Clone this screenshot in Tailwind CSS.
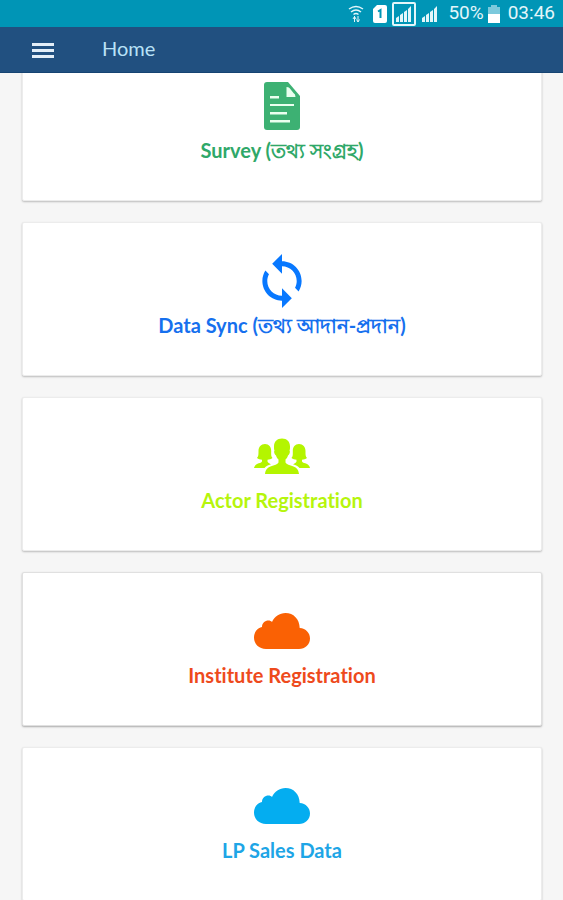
<!DOCTYPE html>
<html lang="en">
<head>
    <meta charset="UTF-8">
    <meta name="viewport" content="width=device-width, initial-scale=1.0">
    <title>Home</title>
    <script src="https://cdn.jsdelivr.net/npm/@tailwindcss/browser@4"></script>
</head>
<body class="bg-[#f6f6f6] h-screen flex flex-col overflow-hidden font-['Lato','Noto_Sans',sans-serif] [font-variant-ligatures:no-common-ligatures]">
    <!-- Status bar -->
    <div class="h-[27px] shrink-0 bg-[#0095b6] text-[#e4f6fa] flex items-center justify-end pr-2 font-['Roboto',sans-serif] text-[19px]">
        <svg class="w-4 h-5 mr-2" viewBox="0 0 16 20" fill="none" stroke="currentColor" stroke-width="1.5" aria-hidden="true">
            <path d="M1 5q7-5 14 0M3 8q5-4 10 0M5.500 10.500q2.500-2 5 0"/>
            <path d="M6.500 12v6M5 15l1.500-2.500L8 15M10 12v6M8.500 15.500L10 18l1.500-2.500" stroke-width="1"/>
        </svg>
        <svg class="w-4 h-5 mr-1" viewBox="0 0 16 20" aria-hidden="true">
            <path d="M5 1h8q2 0 2 2v14q0 2-2 2H3q-2 0-2-2V5z" fill="#fff"/>
            <path d="M6 7.500L8.500 6v8" fill="none" stroke="#0095b6" stroke-width="2"/>
        </svg>
        <svg class="w-6 h-6 mr-1" viewBox="0 0 24 24" aria-hidden="true">
            <rect x="1" y="1" width="22" height="22" rx="1" fill="none" stroke="currentColor" stroke-width="2"/>
            <path d="M4 20v-4l3-2v6zM8 20v-7l3-2v9zM12 20V10l3-2v12zM16 20V7l3-3v16z" fill="currentColor"/>
        </svg>
        <svg class="w-5 h-5 mr-2" viewBox="0 0 20 20" fill="currentColor" aria-hidden="true">
            <path d="M2 18v-4l3-2v6zM6 18v-7l3-2v9zM10 18V8l3-2v12zM14 18V5l3-3v16z"/>
        </svg>
        <span>50%</span>
        <svg class="w-3 h-[18px] ml-1 mr-2" viewBox="0 0 12 18" aria-hidden="true">
            <path d="M3 0h6v2h3v7H0V2h3z" fill="#7cc9dc"/>
            <path d="M0 9h12v9H0z" fill="#fff"/>
        </svg>
        <span>03:46</span>
    </div>

    <!-- App bar -->
    <header class="h-[46px] shrink-0 bg-[#215080] flex items-center pl-8 border-b border-[#164472]">
        <button type="button" aria-label="Menu" class="text-[#e3eef8]">
            <svg class="w-[22px] h-5" viewBox="0 0 22 20" fill="currentColor">
                <path d="M0 3h22v3H0zM0 9h22v3H0zM0 15h22v3H0z"/>
            </svg>
        </button>
        <h1 class="ml-12 pb-1 text-xl text-[#b9e2f7]">Home</h1>
    </header>

    <main class="flex-1 overflow-y-auto [scrollbar-width:none]">
        <nav class="-mt-[26px] pl-[22px] pr-[21px] flex flex-col gap-[21px] text-xl font-bold leading-6 text-center">
            <a href="#survey" class="bg-white rounded-xs border border-[#ececec] shadow-[0_1px_2px_#bbb] pt-[30px] pb-[38px] flex flex-col items-center gap-1 text-[#2fa869]">
                <span class="h-14 flex items-center">
                    <svg class="w-9 h-12" viewBox="0 0 36 48" aria-hidden="true">
                        <path d="M3 0h21l12 14v31q0 3-3 3H3q-3 0-3-3V3q0-3 3-3z" fill="#3db173"/>
                        <path d="M22.500 5v10h9q0-3-2-4l-4-5q-1-1-3-1zM6 14h9v2.500H6zM6 22h24v2H6zM6 30h17v2.500H6zM6 38h20v2.500H6z" fill="#eaffef"/>
                    </svg>
                </span>
                <span>Survey (তথ্য সংগ্রহ)</span>
            </a>
            <a href="#sync" class="bg-white rounded-xs border border-[#ececec] shadow-[0_1px_2px_#bbb] pt-[30px] pb-[38px] flex flex-col items-center gap-1 text-[#1670ee]">
                <span class="h-14 flex items-center">
                    <svg class="w-10 h-[54px]" viewBox="4 1 16 22" fill="#0878ff" aria-hidden="true">
                        <path d="M12 4V1L8 5l4 4V6c3.310 0 6 2.690 6 6 0 1.010-.250 1.970-.700 2.800l1.460 1.460C19.540 15.030 20 13.570 20 12c0-4.420-3.580-8-8-8zm0 14c-3.310 0-6-2.690-6-6 0-1.010.250-1.970.700-2.800L5.240 7.740C4.460 8.970 4 10.430 4 12c0 4.420 3.580 8 8 8v3l4-4-4-4v3z"/>
                    </svg>
                </span>
                <span>Data Sync (তথ্য আদান-প্রদান)</span>
            </a>
            <a href="#actor" class="bg-white rounded-xs border border-[#ececec] shadow-[0_1px_2px_#bbb] pt-[30px] pb-[38px] flex flex-col items-center gap-1 text-[#b6f50c]">
                <span class="h-14 flex items-center">
                    <svg class="w-14 h-9" viewBox="0 0 56 36" fill="#b4f500" aria-hidden="true">
                        <path d="M28 0.500c-5 0-8 3-8 8 0 2 0 3 .500 4-1 1 0 4 1.500 5 .500 2 1.500 3 2.500 4v3c-1 2-4 2.500-8 4-3 1.200-5 3-5.500 7.500h34c-.500-4.500-2.500-6.300-5.500-7.500-4-1.500-7-2-8-4v-3c1-1 2-2 2.500-4 1.500-1 2.500-4 1.500-5 .500-1 .500-2 .500-4 0-5-3-8-8-8z"/>
                        <path id="side" d="M11 6c-4 0-6.500 3-6.500 7 0 4 0 5-1.500 7 1.500 1.200 3 1.500 5 1.700v1.800c-1 1.500-3 1.500-4.500 2.300C1.500 26.800.500 28 0 30h10.500c1.500-1.800 3.500-2.800 6.500-3.800-1.500-.800-3-1.200-3.500-2.700v-1.800c2-.200 3.500-.500 5-1.700-1.500-2-1.300-3-1.300-7 0-4-2.200-7-6.200-7z"/>
                        <use href="#side" transform="matrix(-1 0 0 1 56 0)"/>
                    </svg>
                </span>
                <span>Actor Registration</span>
            </a>
            <a href="#institute" class="bg-white rounded-xs border border-[#e0e0e0] shadow-[0_1px_2px_#aaa] pt-[30px] pb-[38px] flex flex-col items-center gap-1 text-[#ee4a1c]">
                <span class="h-14 flex items-center">
                    <svg class="w-14 h-9" viewBox="0 0 56 36" fill="#fa6104" aria-hidden="true">
                        <path d="M12 36C5 36 0 31 0 24.500 0 19 3.500 15 8 14c0-4 3-6.500 6.500-6.500 1.500 0 2.500.500 3.500 1.500C20.500 3.500 25.500 0 31.500 0c8 0 14 6 14.200 15C52 15.500 56 20 56 25.500 56 31.500 51 36 45 36z"/>
                    </svg>
                </span>
                <span>Institute Registration</span>
            </a>
            <a href="#sales" class="bg-white rounded-xs border border-[#ececec] shadow-[0_1px_2px_#bbb] pt-[30px] pb-[38px] flex flex-col items-center gap-1 text-[#1ea5e6]">
                <span class="h-14 flex items-center">
                    <svg class="w-14 h-9" viewBox="0 0 56 36" fill="#04adf0" aria-hidden="true">
                        <path d="M12 36C5 36 0 31 0 24.500 0 19 3.500 15 8 14c0-4 3-6.500 6.500-6.500 1.500 0 2.500.500 3.500 1.500C20.500 3.500 25.500 0 31.500 0c8 0 14 6 14.200 15C52 15.500 56 20 56 25.500 56 31.500 51 36 45 36z"/>
                    </svg>
                </span>
                <span>LP Sales Data</span>
            </a>
        </nav>
    </main>
</body>
</html>
